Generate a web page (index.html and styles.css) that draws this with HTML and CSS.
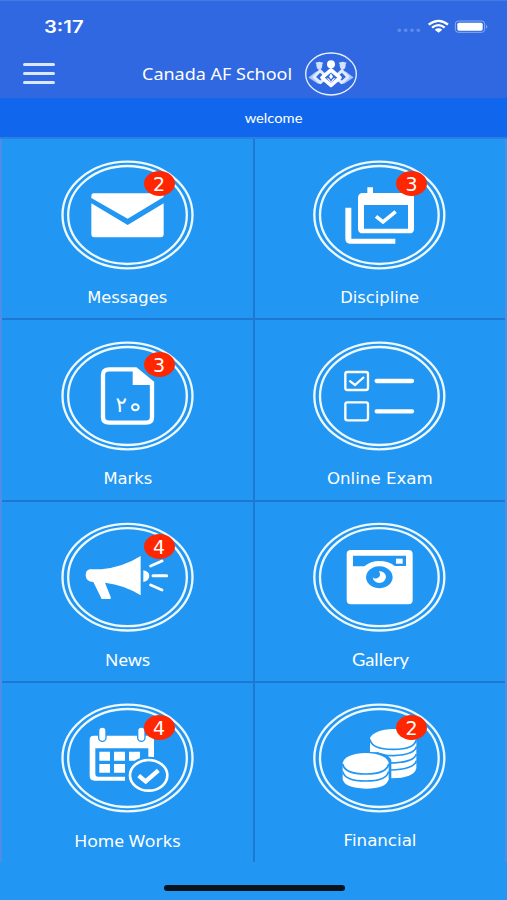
FILE: index.html
```html
<!DOCTYPE html>
<html lang="en">
<head>
    <meta charset="UTF-8">
    <meta name="viewport" content="width=device-width, initial-scale=1.0">
    <title>Canada AF School</title>

    <link rel="stylesheet" href="styles.css">
</head>
<body>

    <header>
        <div class="status">
            <span class="time">3:17</span>
            <svg class="status-icons" width="92" height="16" viewBox="0 0 276 48">
                <g fill="#5f8aea">
                    <circle cx="7" cy="34" r="5.500"/><circle cx="26" cy="34" r="5.500"/><circle cx="45" cy="34" r="5.500"/><circle cx="64" cy="34" r="5.500"/>
                </g>
                <g fill="none" stroke="#fff" stroke-width="7">
                    <path d="M95 17Q125 -6 153 17"/>
                    <path d="M105 26Q125 11 143 26"/>
                </g>
                <path d="M113 32Q125 24 136 32L125 41Z" fill="#fff"/>
                <rect x="175" y="6" width="88" height="34" rx="9" fill="none" stroke="#8aabf2" stroke-width="3"/>
                <rect x="181" y="11" width="76" height="24" rx="5" fill="#fff"/>
                <path d="M267 17q8 6 0 12z" fill="#8aabf2"/>
            </svg>
        </div>
        <div class="titlebar">
            <div class="menu"><i></i><i></i><i></i></div>
            <h1><span>Canada AF School</span></h1>
            <svg class="logo" width="54" height="44" viewBox="0 0 162 132">
                <ellipse cx="81" cy="66" rx="76" ry="63" fill="none" stroke="#e8f1ff" stroke-width="4"/>
                <g fill="#d3e1fc" stroke="none">
                    <path d="M34 32l12-3 12 3-3 4q1 16-9 17-10-1-9-17zM104 32l12-3 12 3-3 4q1 16-9 17-10-1-9-17z"/>
                </g>
                <g fill="none" stroke="#a9c5f8" stroke-width="8">
                    <path d="M40 61L20 76L45 93M122 61L142 76L117 93"/>
                </g>
                <g fill="none" stroke="#e1ebff" stroke-width="9" stroke-linejoin="round">
                    <path d="M48 56L30 75L49 92L68 75ZM114 56L94 75L113 92L132 75Z"/>
                </g>
                <path d="M81 54L54 77L81 100L108 77Z" fill="#2f68e0" stroke="#fff" stroke-width="11" stroke-linejoin="round"/>
                <circle cx="81" cy="37" r="12" fill="#fff"/>
                <path d="M81 64l6 10-6 8-6-8zM67 77l8 3 6 9 6-9 8-3-14 16z" fill="#fff"/>
            </svg>
        </div>
    </header>

    <div class="welcome"><span>welcome</span></div>

    <main class="grid">
        <a class="tile">
            <div class="icon">
                <svg viewBox="30 25 408 336">
                    <g class="ring"><ellipse cx="232.5" cy="193" rx="195" ry="160"/><ellipse cx="232.5" cy="193" rx="178" ry="147"/></g>
                    <path d="M131 128H333Q341 128 341 139L233 204L124 142V137Q124 128 131 128Z"/>
                    <path d="M124 158L233 223L341 158V250Q341 260 332 260H133Q124 260 124 250Z"/>
                </svg>
                <span class="badge">2</span>
            </div>
            <span class="label">Messages</span>
        </a>
        <a class="tile">
            <div class="icon">
                <svg viewBox="36 25 408 336">
                    <g class="ring"><ellipse cx="238" cy="193" rx="195" ry="160"/><ellipse cx="238" cy="193" rx="178" ry="147"/></g>
                    <path d="M202 110H219V127H328Q342 128 342 141V234Q342 248 328 248H189Q174 248 174 234V142Q174 127 189 127H202ZM192 163V234H324V163Z" fill-rule="evenodd"/>
                    <path d="M136 171H154V264H286V279H152Q136 279 136 264Z"/>
                    <path d="M228 197L249 214L287 183" class="line" stroke-width="11"/>
                </svg>
                <span class="badge">3</span>
            </div>
            <span class="label">Discipline</span>
        </a>

        <a class="tile">
            <div class="icon">
                <svg viewBox="30 29 408 336">
                    <g class="ring"><ellipse cx="232.5" cy="197" rx="195" ry="160"/><ellipse cx="232.5" cy="197" rx="178" ry="147"/></g>
                    <path d="M178 117H257L306 157V261Q306 277 288 277H178Q159 277 159 261V133Q159 117 178 117Z" class="line" stroke-width="13"/>
                    <path d="M248 115H262L312 158V164H248Z"/>
                    <text x="214" y="246" class="digits">۲</text>
                    <ellipse cx="256" cy="231" rx="10" ry="9" class="line" stroke-width="6"/>
                </svg>
                <span class="badge">3</span>
            </div>
            <span class="label">Marks</span>
        </a>
        <a class="tile">
            <div class="icon">
                <svg viewBox="36 29 408 336">
                    <g class="ring"><ellipse cx="238" cy="197" rx="195" ry="160"/><ellipse cx="238" cy="197" rx="178" ry="147"/></g>
                    <g class="line" stroke-width="7">
                        <rect x="136" y="125" width="68" height="54" rx="6"/>
                        <rect x="136" y="216" width="68" height="54" rx="6"/>
                        <path d="M148 151L165 164L192 140"/>
                    </g>
                    <path d="M230 152H336M230 243H336" class="line" stroke-width="13" stroke-linecap="round"/>
                </svg>
            </div>
            <span class="label wide">Online Exam</span>
        </a>

        <a class="tile">
            <div class="icon">
                <svg viewBox="30 33 408 336">
                    <g class="ring"><ellipse cx="232.5" cy="201.500" rx="195" ry="160"/><ellipse cx="232.5" cy="201.500" rx="178" ry="147"/></g>
                    <path d="M119 178H154Q220 171 272 138V256Q224 225 165 218L182 261V267H155L130 216Q107 215 107 196Q107 181 119 178Z"/>
                    <path d="M280 181Q298 184 298 198Q297 213 280 216Z"/>
                    <path d="M302 168L336 153M309 197H350M302 225L336 240" class="line" stroke-width="9" stroke-linecap="round"/>
                </svg>
                <span class="badge">4</span>
            </div>
            <span class="label noto">News</span>
        </a>
        <a class="tile">
            <div class="icon">
                <svg viewBox="36 33 408 336">
                    <g class="ring"><ellipse cx="238" cy="201.500" rx="195" ry="160"/><ellipse cx="238" cy="201.500" rx="178" ry="147"/></g>
                    <path d="M153 120H325Q338 120 338 132V271Q338 283 325 283H153Q140 283 140 271V132Q140 120 153 120ZM159 137V169H193Q212 153 238 153Q266 153 284 168H318V137ZM238 169A40 33 0 1 0 238.100 169Z" fill-rule="evenodd"/>
                    <rect x="288" y="146" width="20" height="15"/>
                    <path d="M236 184Q257 184 258 201Q256 218 238 219Q221 218 218 202Q222 207 231 205Q239 202 240 195Q241 188 236 184Z"/>
                </svg>
            </div>
            <span class="label lato">Gallery</span>
        </a>

        <a class="tile">
            <div class="icon">
                <svg viewBox="30 37 408 336">
                    <g class="ring"><ellipse cx="232.5" cy="205" rx="195" ry="160"/><ellipse cx="232.5" cy="205" rx="178" ry="147"/></g>
                    <path d="M131 138H301Q312 139 312 149V202H295V176H136V254Q136 261 143 261H225V273H134Q119 273 119 259V149Q119 139 131 138Z"/>
                    <g class="peg"><rect x="146" y="112" width="22" height="43" rx="11"/><rect x="263" y="112" width="22" height="43" rx="11"/></g>
                    <path d="M148 186H180V213H148ZM192 186H225V213H192ZM237 186H270V213H237ZM148 223H180V249H148ZM192 223H225V249H192Z"/>
                    <ellipse cx="296" cy="257" rx="66" ry="56" fill="#2196f3"/>
                    <ellipse cx="296" cy="257" rx="56" ry="46" class="line" stroke-width="8"/>
                    <path d="M266 258L287 275L325 242" class="line" stroke-width="13"/>
                </svg>
                <span class="badge">4</span>
            </div>
            <span class="label noto">Home Works</span>
        </a>
        <a class="tile">
            <div class="icon">
                <svg viewBox="36 37 408 336">
                    <g class="ring"><ellipse cx="238" cy="205" rx="195" ry="160"/><ellipse cx="238" cy="205" rx="178" ry="147"/></g>
                    <path d="M210 146A70 32 0 0 1 349 146V236Q342 266 274 266V211Q263 187 210 187Z"/>
                    <path d="M210 149Q214 179 280 179Q345 179 349 149M230 188Q245 198 280 198Q345 195 349 171M268 220Q343 219 349 193M272 241Q343 239 349 213" class="gap"/>
                    <path d="M126 221Q127 187 197 186Q266 187 271 221V278H127Z" fill="#2196f3"/>
                    <path d="M128 221A69 31 0 0 1 266 221V269Q260 297 197 297Q134 296 128 269Z"/>
                    <path d="M128 223Q134 253 197 253Q260 253 266 223M128 245Q134 274 197 274Q260 274 266 245" class="gap"/>
                </svg>
                <span class="badge">2</span>
            </div>
            <span class="label wide">Financial</span>
        </a>
    </main>

    <footer><div class="home"></div></footer>

</body>
</html>
```
FILE: styles.css
```css
*{
    box-sizing: border-box;
}

body{
    margin: 0;
    width: 507px;
    height: 900px;
    overflow: hidden;
    background-color: #2196f3;
    color: #fff;
    font-family: "Noto Sans", sans-serif;
}

svg{
    display: block;
}

header{
    height: 98px;
    background-color: #2f68e0;
    border-top: 1px solid #4379e3;
}

.status{
    display: flex;
    justify-content: space-between;
    align-items: center;
    height: 51px;
    padding: 0 18px 0 44px;
}

.time{
    font: 600 17px/20px Inter, sans-serif;
    transform: scaleX(1.190);
    transform-origin: left;
}

.titlebar{
    display: flex;
    align-items: center;
    height: 44px;
    padding-left: 22.500px;
}

.menu{
    display: flex;
    flex-direction: column;
    gap: 6px;
    width: 32.500px;
    margin-top: -1px;
}

.menu i{
    height: 2.800px;
    background-color: #dbe7ff;
    border-radius: 2px;
}

h1{
    width: 150px;
    margin: 0 12px 0 87px;
    font-size: 16px;
    line-height: 24px;
    font-weight: normal;
    white-space: nowrap;
}

h1 span{
    display: inline-block;
    transform: scaleX(1.125);
    transform-origin: left;
}

.welcome{
    height: 41px;
    padding-left: 41px;
    background-color: #1067ee;
    border-bottom: 2px solid #2b7fe0;
    font: 13px/40px Lato, sans-serif;
    text-align: center;
}

.welcome span{
    display: inline-block;
    transform: scaleX(1.130);
}

.grid{
    display: grid;
    grid-template-columns: 253px 250px;
    grid-template-rows: repeat(4, 181.300px);
    width: 507px;
    height: 723px;
    border-left: 2px solid #4b8ee9;
    border-right: 2px solid #4b8ee9;
    overflow: hidden;
}

.tile{
    display: flex;
    flex-direction: column;
    align-items: center;
    padding-top: 19.500px;
    border-bottom: 2px solid #1c78d3;
}

.tile:nth-child(odd){
    border-right: 2px solid #1c78d3;
}

.tile:nth-last-child(-n+2){
    border-bottom: none;
}

.icon{
    position: relative;
    width: 136px;
    height: 112px;
}

.icon svg{
    width: 136px;
    height: 112px;
    fill: #fff;
}

.ring{
    fill: none;
    stroke: #eef8ff;
    stroke-width: 7px;
}

.line{
    fill: none;
    stroke: #fff;
}

.gap{
    fill: none;
    stroke: #2196f3;
    stroke-width: 5px;
}

.peg{
    stroke: #2196f3;
    stroke-width: 4px;
}

.digits{
    font: 64px "DejaVu Sans", sans-serif;
    text-anchor: middle;
}

.badge{
    position: absolute;
    left: 84px;
    top: 12.500px;
    width: 31px;
    height: 25px;
    border-radius: 50%;
    background-color: #ff2600;
    font: 19px/26px "DejaVu Sans", sans-serif;
    text-align: center;
}

.label{
    margin-top: 15px;
    font: 16px/24px "DejaVu Sans", sans-serif;
    white-space: nowrap;
    transform: scaleX(1.020);
}

.wide{
    transform: scaleX(1.040);
}

.noto{
    font-family: "Noto Sans", sans-serif;
    transform: scaleX(1.100);
}

.lato{
    font-family: Lato, sans-serif;
    font-size: 17px;
    transform: scaleX(1.080);
}

footer{
    display: flex;
    justify-content: center;
    height: 38px;
    padding: 23px 0 0 2px;
}

.home{
    width: 181px;
    height: 6px;
    border-radius: 3px;
    background-color: #07131d;
}
```
